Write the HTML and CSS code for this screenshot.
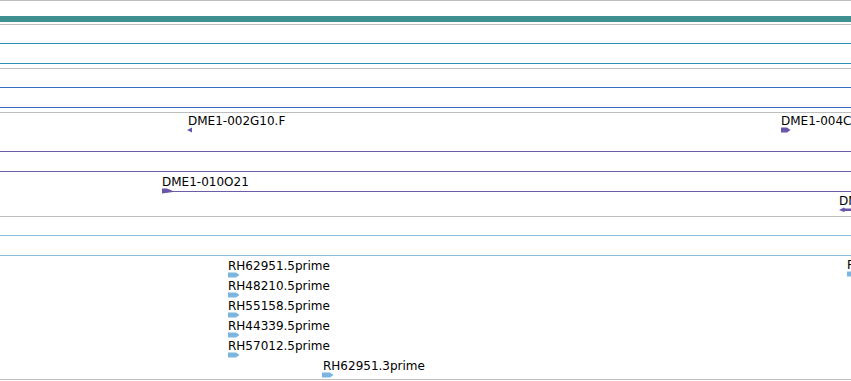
FILE: index.html
```html
<!DOCTYPE html>
<html>
<head>
<meta charset="utf-8">
<link rel="stylesheet" href="styles.css">
</head>
<body>
<div class="view">
  <div class="ln gray"></div>
  <div class="sp h15"></div>
  <div class="ruler"></div>
  <div class="sp h2"></div>
  <div class="ln gray"></div>
  <div class="sp h18"></div>
  <div class="ln teal"></div>
  <div class="sp h19"></div>
  <div class="ln teal"></div>
  <div class="sp h4"></div>
  <div class="ln gray"></div>
  <div class="sp h18"></div>
  <div class="ln blue"></div>
  <div class="sp h19"></div>
  <div class="ln blue"></div>
  <div class="sp h4"></div>
  <div class="ln gray"></div>

  <div class="track h38">
    <div class="feat" style="left:187px;top:1px">
      <span class="lbl" style="margin-left:1px">DME1-002G10.F</span>
      <svg class="glyph" width="6" height="6" viewBox="0 0 6 6"><polygon points="0,3 5,0.5 5,5.5" fill="#6a56a8"/></svg>
    </div>
    <div class="feat" style="left:781px;top:1px">
      <span class="lbl">DME1-004C10.F</span>
      <svg class="glyph" width="10" height="6" viewBox="0 0 10 6"><polygon points="0,0.5 6,0.5 9.5,3 6,5.5 0,5.5" fill="#6a56a8"/></svg>
    </div>
  </div>
  <div class="ln purple"></div>
  <div class="sp h19"></div>
  <div class="ln purple"></div>

  <div class="track h44">
    <div class="hline" style="left:162px;top:19px"></div>
    <div class="feat" style="left:162px;top:3px">
      <span class="lbl">DME1-010O21</span>
      <svg class="glyph" width="12" height="6" viewBox="0 0 12 6"><polygon points="0,0.5 5,0.5 11,3 11,4 0,5.5" fill="#6a56a8"/></svg>
    </div>
    <div class="feat" style="left:839px;top:22px">
      <span class="lbl">DME1-012F03.F</span>
      <svg class="glyph" width="14" height="6" viewBox="0 0 14 6"><polygon points="0,3 5,0.5 6,1.5 14,1.5 14,4 6,4 5,5 " fill="#6a56a8"/></svg>
    </div>
  </div>
  <div class="ln gray"></div>
  <div class="sp h18"></div>
  <div class="ln lblue"></div>
  <div class="sp h19"></div>
  <div class="ln lblue"></div>

  <div class="track h123">
    <div class="feat" style="left:228px;top:3px">
      <span class="lbl">RH62951.5prime</span>
      <svg class="glyph" width="12" height="6" viewBox="0 0 12 6"><polygon points="0,0.5 8,0.5 11.5,3 8,5.5 0,5.5" fill="#7cb6e0"/></svg>
    </div>
    <div class="feat" style="left:228px;top:23px">
      <span class="lbl">RH48210.5prime</span>
      <svg class="glyph" width="12" height="6" viewBox="0 0 12 6"><polygon points="0,0.5 8,0.5 11.5,3 8,5.5 0,5.5" fill="#7cb6e0"/></svg>
    </div>
    <div class="feat" style="left:228px;top:43px">
      <span class="lbl">RH55158.5prime</span>
      <svg class="glyph" width="12" height="6" viewBox="0 0 12 6"><polygon points="0,0.5 8,0.5 11.5,3 8,5.5 0,5.5" fill="#7cb6e0"/></svg>
    </div>
    <div class="feat" style="left:228px;top:63px">
      <span class="lbl">RH44339.5prime</span>
      <svg class="glyph" width="12" height="6" viewBox="0 0 12 6"><polygon points="0,0.5 8,0.5 11.5,3 8,5.5 0,5.5" fill="#7cb6e0"/></svg>
    </div>
    <div class="feat" style="left:228px;top:83px">
      <span class="lbl">RH57012.5prime</span>
      <svg class="glyph" width="12" height="6" viewBox="0 0 12 6"><polygon points="0,0.5 8,0.5 11.5,3 8,5.5 0,5.5" fill="#7cb6e0"/></svg>
    </div>
    <div class="feat" style="left:322px;top:103px">
      <span class="lbl" style="margin-left:1px">RH62951.3prime</span>
      <svg class="glyph" width="12" height="6" viewBox="0 0 12 6"><polygon points="0,0.5 8,0.5 11.5,3 8,5.5 0,5.5" fill="#7cb6e0"/></svg>
    </div>
    <div class="feat" style="left:847px;top:2px">
      <span class="lbl">RH01234.5prime</span>
      <svg class="glyph" width="12" height="6" viewBox="0 0 12 6"><polygon points="0,0.5 8,0.5 11.5,3 8,5.5 0,5.5" fill="#7cb6e0"/></svg>
    </div>
  </div>
  <div class="ln gray"></div>
</div>
</body>
</html>
```
FILE: styles.css
```css
html, body {
  margin: 0;
  padding: 0;
  background: #ffffff;
}
.view {
  width: 851px;
  height: 381px;
  overflow: hidden;
  display: flex;
  flex-direction: column;
  font-family: "DejaVu Sans", sans-serif;
  font-size: 12px;
  color: #000;
}
.ln { height: 1px; flex: none; }
.gray { background: #bdbdbd; }
.teal { background: #2a90ae; }
.blue { background: #3a6cc4; }
.purple { background: #6e5ca6; }
.lblue { background: #8cbcdc; }
.sp { flex: none; }
.h2 { height: 2px; }
.h4 { height: 4px; }
.h15 { height: 15px; }
.h18 { height: 18px; }
.h19 { height: 19px; }
.ruler {
  height: 6px;
  flex: none;
  background: #3e8f8f;
}
.track {
  position: relative;
  flex: none;
}
.h38 { height: 38px; }
.h44 { height: 44px; }
.h123 { height: 123px; }
.feat {
  position: absolute;
  display: flex;
  flex-direction: column;
  align-items: flex-start;
  white-space: nowrap;
}
.lbl {
  display: block;
  line-height: 14px;
  height: 14px;
}
.glyph {
  display: block;
  margin-top: -1px;
}
.hline {
  position: absolute;
  right: 0;
  height: 1px;
  background: #6e5ca6;
}
```
